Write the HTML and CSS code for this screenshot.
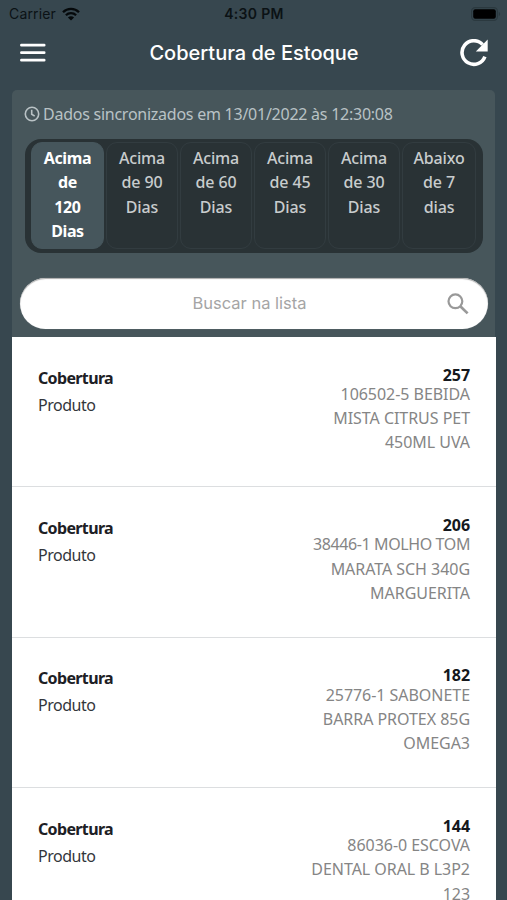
FILE: index.html
```html
<!DOCTYPE html>
<html lang="pt-BR">
    <head>
        <meta charset="utf-8">
        <meta name="viewport" content="width=device-width, initial-scale=1" />
        <title>Cobertura de Estoque</title>
        <link rel="stylesheet" href="styles.css">
    </head>
    <body>
        <div class="statusbar">
            <div class="carrier">
                <span>Carrier</span>
                <svg width="18" height="14" viewBox="0 0 18 14">
                    <path d="M1 5.2C5.4 .8 12.6 .8 17 5.2M3.9 8.2c2.8-2.8 7.4-2.8 10.2 0" fill="none" stroke="#05090b" stroke-width="2.3"/>
                    <path d="M9 13.6 5.9 10.4c1.7-1.7 4.5-1.7 6.2 0z" fill="#05090b"/>
                </svg>
            </div>
            <span class="clock">4:30 PM</span>
            <svg class="battery" width="30" height="14" viewBox="0 0 30 14">
                <rect x=".6" y=".6" width="25.8" height="12.8" rx="3.6" fill="none" stroke="#2b393f" stroke-width="1.2"/>
                <rect x="2.2" y="2.2" width="22.6" height="9.6" rx="2" fill="#000"/>
                <path d="M27.8 4.8v4.4c1.8-.8 1.8-3.6 0-4.4z" fill="#2b393f"/>
            </svg>
        </div>

        <header class="navbar">
            <svg class="menu" width="26" height="20" viewBox="0 0 26 20">
                <path d="M1.4 2.2h22.8M1.4 9.7h22.8M1.4 17.2h22.8" stroke="#fff" stroke-width="2.7" stroke-linecap="round"/>
            </svg>
            <h1>Cobertura de Estoque</h1>
            <svg class="refresh" width="28" height="28" viewBox="0 0 28 28">
                <path d="M22.6 5.6A11.8 11.8 0 1 0 24.9 17.6" fill="none" stroke="#fff" stroke-width="3.6"/>
                <path d="M27.7.6v12H15.8z" fill="#fff"/>
            </svg>
        </header>

        <main class="content">
            <div class="sync">
                <svg width="16" height="16" viewBox="0 0 16 16" fill="none" stroke="#b9c2c5" stroke-width="1.6">
                    <circle cx="8" cy="8" r="6.7"/>
                    <path d="M7.7 3.8v4.4l3 2"/>
                </svg>
                <span>Dados sincronizados em 13/01/2022 às 12:30:08</span>
            </div>

            <div class="segments">
                <div class="segment active">Acima<br>de<br>120<br>Dias</div>
                <div class="segment">Acima<br>de 90<br>Dias</div>
                <div class="segment">Acima<br>de 60<br>Dias</div>
                <div class="segment">Acima<br>de 45<br>Dias</div>
                <div class="segment">Acima<br>de 30<br>Dias</div>
                <div class="segment">Abaixo<br>de 7<br>dias</div>
            </div>

            <div class="search">
                <span>Buscar na lista</span>
                <svg width="22" height="22" viewBox="0 0 22 22" fill="none" stroke="#999">
                    <circle cx="8.4" cy="8.3" r="6.9" stroke-width="2.2"/>
                    <path d="M13.3 13.2l7.3 7.2" stroke-width="2.7"/>
                </svg>
            </div>

            <div class="list">
                <div class="row">
                    <div class="labels"><b>Cobertura</b><span>Produto</span></div>
                    <div class="values"><b>257</b><span>106502-5 BEBIDA</span><span>MISTA CITRUS PET</span><span>450ML UVA</span></div>
                </div>
                <div class="row">
                    <div class="labels"><b>Cobertura</b><span>Produto</span></div>
                    <div class="values"><b>206</b><span class="tight">38446-1 MOLHO TOM</span><span>MARATA SCH 340G</span><span>MARGUERITA</span></div>
                </div>
                <div class="row">
                    <div class="labels"><b>Cobertura</b><span>Produto</span></div>
                    <div class="values"><b>182</b><span>25776-1 SABONETE</span><span>BARRA PROTEX 85G</span><span>OMEGA3</span></div>
                </div>
                <div class="row">
                    <div class="labels"><b>Cobertura</b><span>Produto</span></div>
                    <div class="values"><b>144</b><span>86036-0 ESCOVA</span><span>DENTAL ORAL B L3P2</span><span>123</span></div>
                </div>
            </div>
        </main>
    </body>
</html>
```
FILE: styles.css
```css
* {
    padding: 0;
    margin: 0;
    box-sizing: border-box;
}

body {
    height: 100vh;
    overflow: hidden;
    display: flex;
    flex-direction: column;
    background: #37474f;
    font-family: "Noto Sans", sans-serif;
    font-size: 16px;
}

svg {
    display: block;
    flex-shrink: 0;
}

.statusbar {
    display: grid;
    grid-template-columns: 1fr auto 1fr;
    align-items: center;
    height: 27px;
    padding: 0 6px 0 9px;
    font-family: Inter, sans-serif;
    font-size: 14px;
    color: #0b1215;
}
.carrier {
    display: flex;
    align-items: center;
    gap: 6px;
    letter-spacing: 0.15px;
}
.clock {
    font-weight: 600;
    letter-spacing: 0.3px;
    margin-right: 2px;
}
.battery {
    justify-self: end;
}

.navbar {
    display: grid;
    grid-template-columns: 1fr auto 1fr;
    align-items: center;
    height: 51px;
    padding: 0 19px 0 20px;
    color: #fff;
}
.navbar h1 {
    font-family: Inter, sans-serif;
    font-size: 20px;
    font-weight: 500;
}
.refresh {
    justify-self: end;
}

.content {
    flex: 1;
    min-height: 0;
    margin: 12px 12px 0;
    background: #47565b;
    border-radius: 5px 5px 0 0;
}

.sync {
    display: flex;
    align-items: center;
    gap: 3px;
    height: 49px;
    padding: 0 0 2px 12px;
    color: #b9c2c5;
    letter-spacing: -0.25px;
}

.segments {
    display: grid;
    grid-template-columns: 73px repeat(4, 72px) 1fr;
    gap: 2px;
    height: 114px;
    margin: 0 12px 0 13px;
    padding: 3px 7px 4px 6px;
    background: #293235;
    border-radius: 16px;
}
.segment {
    padding-top: 3px;
    border: 1px solid #323c40;
    border-radius: 11px;
    color: #c8cccd;
    font-weight: 500;
    line-height: 24.4px;
    letter-spacing: -0.15px;
    text-align: center;
}
.segment.active {
    background: #46565c;
    border-color: #46565c;
    color: #fff;
    font-weight: 700;
    letter-spacing: -0.4px;
}

.search {
    display: grid;
    grid-template-columns: 1fr auto 1fr;
    align-items: center;
    height: 51px;
    margin: 25px 7px 8px 8px;
    padding: 0 19px 0 10px;
    background: #fff;
    border-radius: 26px;
    box-shadow: inset 0 1px 1px #aaa, 0 0 1px #8a9497;
    font-family: Inter, sans-serif;
    font-size: 16.5px;
    color: #a5a5a5;
}
.search span {
    grid-column: 2;
    padding-bottom: 2px;
}
.search svg {
    justify-self: end;
}

.list {
    margin-right: -1px;
    background: #fff;
}
.row {
    display: flex;
    justify-content: space-between;
    height: 150.4px;
    padding: 27.5px 26px 0;
    border-bottom: 1px solid #dcdee0;
}
.labels, .values {
    display: flex;
    flex-direction: column;
}
.labels {
    color: #33363b;
    line-height: 27px;
    letter-spacing: -0.5px;
}
.labels b {
    color: #1d2025;
    letter-spacing: -0.65px;
}
.values {
    align-items: flex-end;
    padding-top: 3px;
    color: #858585;
    line-height: 24.2px;
    letter-spacing: -0.04px;
}
.values b {
    color: #15181d;
    line-height: 14.5px;
}
.values .tight {
    letter-spacing: -0.4px;
}
```
